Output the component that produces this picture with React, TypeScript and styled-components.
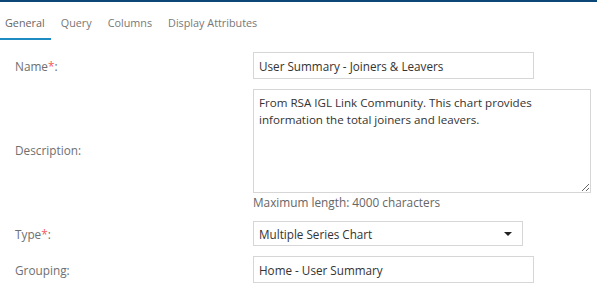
import styled, { createGlobalStyle } from 'styled-components';

const GlobalStyle = createGlobalStyle`
    body {
        margin: 0;
        background: #fff;
        font-family: 'Open Sans', 'Liberation Sans', sans-serif;
    }
`;

const Page = styled.div`
    width: 597px;
    height: 294px;
    border-top: 2px solid #0b4677;
    box-sizing: border-box;
    overflow: hidden;
`;

const TabBar = styled.div`
    display: flex;
    gap: 5px;
    padding-top: 12px;
`;

interface ITabProps {
    active?: boolean;
}

const Tab = styled.div<ITabProps>`
    padding: 0 6px 7px 5px;
    font-size: 10.8px;
    line-height: 17px;
    color: ${({ active }) => (active ? '#666' : '#777')};
    border-bottom: 2px solid ${({ active }) => (active ? '#1e8bc3' : 'transparent')};
`;

const Form = styled.div`
    display: grid;
    grid-template-columns: 238px 1fr;
    row-gap: 10px;
    padding: 12px 0 0 15px;
`;

const Label = styled.div`
    display: flex;
    align-items: center;
    font-size: 11.8px;
    color: #6f6f6f;
`;

const Required = styled.span`
    color: #f25b5b;
`;

const Field = styled.div`
    display: flex;
    flex-direction: column;
`;

interface IBoxProps {
    width: number;
}

const TextInput = styled.input<IBoxProps>`
    width: ${({ width }) => width}px;
    height: 27px;
    box-sizing: border-box;
    border: 1px solid #d6d6d6;
    padding: 0 5px;
    font-family: inherit;
    font-size: 11.7px;
    color: #333;
    outline: none;
`;

const TextArea = styled.textarea`
    width: 338px;
    height: 104px;
    box-sizing: border-box;
    border: 1px solid #d6d6d6;
    padding: 4px 5px;
    font-family: inherit;
    font-size: 11.6px;
    line-height: 17px;
    color: #333;
    outline: none;
    margin: 0;
    display: block;
`;

const Hint = styled.div`
    font-size: 11.8px;
    line-height: 18px;
    color: #666;
`;

const SelectBox = styled.div<IBoxProps>`
    width: ${({ width }) => width}px;
    height: 25px;
    box-sizing: border-box;
    border: 1px solid #d6d6d6;
    padding: 0 10px 0 5px;
    display: flex;
    align-items: center;
    justify-content: space-between;
    font-size: 11.7px;
    color: #333;
`;

const Caret = styled.span`
    width: 0;
    height: 0;
    border-left: 4px solid transparent;
    border-right: 4px solid transparent;
    border-top: 4px solid #222;
`;

const App = () => {
    return (
        <>
            <GlobalStyle />
            <Page>
                <TabBar>
                    <Tab active>General</Tab>
                    <Tab>Query</Tab>
                    <Tab>Columns</Tab>
                    <Tab>Display Attributes</Tab>
                </TabBar>
                <Form>
                    <Label>
                        Name<Required>*</Required>:
                    </Label>
                    <Field>
                        <TextInput width={281} defaultValue="User Summary - Joiners & Leavers" />
                    </Field>

                    <Label>Description:</Label>
                    <Field>
                        <TextArea defaultValue="From RSA IGL Link Community. This chart provides information the total joiners and leavers." />
                        <Hint>Maximum length: 4000 characters</Hint>
                    </Field>

                    <Label>
                        Type<Required>*</Required>:
                    </Label>
                    <Field>
                        <SelectBox width={270}>
                            Multiple Series Chart
                            <Caret />
                        </SelectBox>
                    </Field>

                    <Label>Grouping:</Label>
                    <Field>
                        <TextInput width={281} defaultValue="Home - User Summary" />
                    </Field>
                </Form>
            </Page>
        </>
    );
};

export default App;
